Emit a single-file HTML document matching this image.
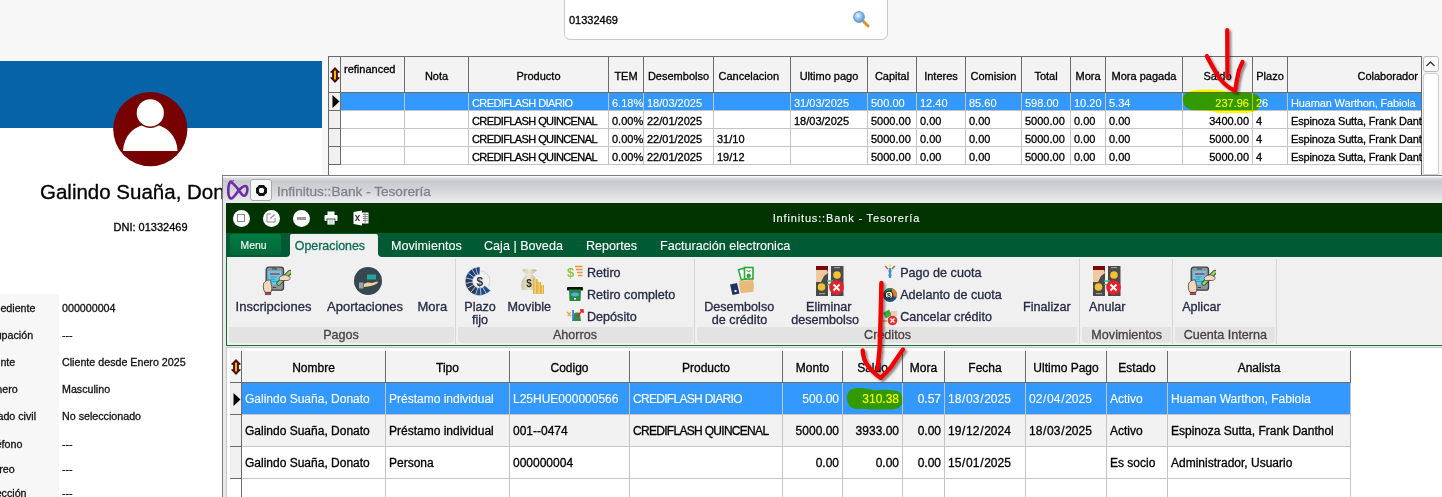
<!DOCTYPE html>
<html><head><meta charset="utf-8"><style>
html,body{margin:0;padding:0}
body{width:1442px;height:497px;overflow:hidden;position:relative;background:#f7f7f7;font-family:"Liberation Sans",sans-serif}
.a{position:absolute}
.t{white-space:pre;-webkit-text-stroke:0.3px currentColor}
.clip{position:absolute;overflow:hidden}
</style></head><body>

<div class="a" style="left:564px;top:-8px;width:322px;height:46px;background:#fff;border:1px solid #c9c9c9;border-radius:6px;"></div>
<div class="a t" style="left:569px;top:14px;font-size:11px;line-height:12.65px;color:#000;">01332469</div>
<svg class="a" style="left:852px;top:10px" width="18" height="18" viewBox="0 0 18 18">
<defs><radialGradient id="mg" cx="40%" cy="35%" r="60%"><stop offset="0" stop-color="#e8f4ff"/><stop offset="1" stop-color="#5b9bd8"/></radialGradient></defs>
<line x1="10" y1="10" x2="16" y2="16" stroke="#d29a2a" stroke-width="3" stroke-linecap="round"/>
<circle cx="7" cy="7" r="5.3" fill="url(#mg)" stroke="#6f9fcf" stroke-width="1.2"/>
</svg>
<div class="a" style="left:0px;top:61px;width:322px;height:436px;background:#fff;"></div>
<div class="a" style="left:0px;top:61px;width:322px;height:67px;background:#0763a8;"></div>
<svg class="a" style="left:112px;top:91px" width="77" height="77" viewBox="0 0 77 77">
<circle cx="38.3" cy="38.2" r="37.1" fill="#770000"/>
<path d="M11.1 60.1 A27.2 27.2 0 0 1 65.5 60.1 Z" fill="#fff"/>
<circle cx="38.3" cy="21.9" r="15.1" fill="#770000"/>
<circle cx="38.3" cy="21.9" r="13.6" fill="#fff"/>
</svg>
<div class="a t" style="left:40px;top:180px;font-size:20.5px;line-height:23.57px;color:#000;">Galindo Suaña, Donato</div>
<div class="a t" style="left:-349.5px;width:1000px;text-align:center;top:221px;font-size:11px;line-height:12.65px;color:#000;">DNI: 01332469</div>
<div class="a" style="left:0px;top:294px;width:59px;height:203px;background:#f7f7f7;"></div>
<div class="clip" style="left:0;top:0;width:59px;height:497px">
<div class="a t" style="left:-18px;top:302px;font-size:10.7px;line-height:12.30px;color:#111;">Expediente</div>
<div class="a t" style="left:-18px;top:329px;font-size:10.7px;line-height:12.30px;color:#111;">Ocupación</div>
<div class="a t" style="left:-18px;top:356px;font-size:10.7px;line-height:12.30px;color:#111;">Cliente</div>
<div class="a t" style="left:-18px;top:383px;font-size:10.7px;line-height:12.30px;color:#111;">Género</div>
<div class="a t" style="left:-18px;top:410px;font-size:10.7px;line-height:12.30px;color:#111;">Estado civil</div>
<div class="a t" style="left:-18px;top:438px;font-size:10.7px;line-height:12.30px;color:#111;">Teléfono</div>
<div class="a t" style="left:-18px;top:463px;font-size:10.7px;line-height:12.30px;color:#111;">Correo</div>
<div class="a t" style="left:-18px;top:487px;font-size:10.7px;line-height:12.30px;color:#111;">Dirección</div>
</div>
<div class="a t" style="left:62px;top:302px;font-size:10.7px;line-height:12.30px;color:#111;">000000004</div>
<div class="a t" style="left:62px;top:329px;font-size:10.7px;line-height:12.30px;color:#111;">---</div>
<div class="a t" style="left:62px;top:356px;font-size:10.7px;line-height:12.30px;color:#111;">Cliente desde Enero 2025</div>
<div class="a t" style="left:62px;top:383px;font-size:10.7px;line-height:12.30px;color:#111;">Masculino</div>
<div class="a t" style="left:62px;top:410px;font-size:10.7px;line-height:12.30px;color:#111;">No seleccionado</div>
<div class="a t" style="left:62px;top:438px;font-size:10.7px;line-height:12.30px;color:#111;">---</div>
<div class="a t" style="left:62px;top:463px;font-size:10.7px;line-height:12.30px;color:#111;">---</div>
<div class="a t" style="left:62px;top:487px;font-size:10.7px;line-height:12.30px;color:#111;">---</div>
<div class="a" style="left:328px;top:56px;width:1094px;height:119px;background:#fff;"></div>
<div class="a" style="left:328px;top:56px;width:1094px;height:36px;background:#f3f3f3;"></div>
<div class="a" style="left:341px;top:93px;width:1081px;height:17px;background:#3399ff;"></div>
<div class="a" style="left:329px;top:93px;width:12px;height:71px;background:#f0f0f0;"></div>
<div class="a" style="left:328px;top:56px;width:1094px;height:1px;background:#6b6b6b;"></div>
<div class="a" style="left:328px;top:92px;width:1094px;height:1px;background:#6b6b6b;"></div>
<div class="a" style="left:341px;top:110px;width:1081px;height:1px;background:#c4c4c4;"></div>
<div class="a" style="left:328px;top:110px;width:13px;height:1px;background:#6b6b6b;"></div>
<div class="a" style="left:341px;top:128px;width:1081px;height:1px;background:#c4c4c4;"></div>
<div class="a" style="left:328px;top:128px;width:13px;height:1px;background:#6b6b6b;"></div>
<div class="a" style="left:341px;top:146px;width:1081px;height:1px;background:#c4c4c4;"></div>
<div class="a" style="left:328px;top:146px;width:13px;height:1px;background:#6b6b6b;"></div>
<div class="a" style="left:341px;top:164px;width:1081px;height:1px;background:#c4c4c4;"></div>
<div class="a" style="left:328px;top:164px;width:13px;height:1px;background:#6b6b6b;"></div>
<div class="a" style="left:328px;top:56px;width:1px;height:119px;background:#6b6b6b;"></div>
<div class="a" style="left:1421px;top:56px;width:1px;height:119px;background:#6b6b6b;"></div>
<div class="a" style="left:340px;top:56px;width:1px;height:109px;background:#6b6b6b;"></div>
<div class="a" style="left:404px;top:56px;width:1px;height:37px;background:#6b6b6b;"></div>
<div class="a" style="left:404px;top:93px;width:1px;height:72px;background:#c4c4c4;"></div>
<div class="a" style="left:468px;top:56px;width:1px;height:37px;background:#6b6b6b;"></div>
<div class="a" style="left:468px;top:93px;width:1px;height:72px;background:#c4c4c4;"></div>
<div class="a" style="left:608px;top:56px;width:1px;height:37px;background:#6b6b6b;"></div>
<div class="a" style="left:608px;top:93px;width:1px;height:72px;background:#c4c4c4;"></div>
<div class="a" style="left:643px;top:56px;width:1px;height:37px;background:#6b6b6b;"></div>
<div class="a" style="left:643px;top:93px;width:1px;height:72px;background:#c4c4c4;"></div>
<div class="a" style="left:713px;top:56px;width:1px;height:37px;background:#6b6b6b;"></div>
<div class="a" style="left:713px;top:93px;width:1px;height:72px;background:#c4c4c4;"></div>
<div class="a" style="left:790px;top:56px;width:1px;height:37px;background:#6b6b6b;"></div>
<div class="a" style="left:790px;top:93px;width:1px;height:72px;background:#c4c4c4;"></div>
<div class="a" style="left:867px;top:56px;width:1px;height:37px;background:#6b6b6b;"></div>
<div class="a" style="left:867px;top:93px;width:1px;height:72px;background:#c4c4c4;"></div>
<div class="a" style="left:916px;top:56px;width:1px;height:37px;background:#6b6b6b;"></div>
<div class="a" style="left:916px;top:93px;width:1px;height:72px;background:#c4c4c4;"></div>
<div class="a" style="left:965px;top:56px;width:1px;height:37px;background:#6b6b6b;"></div>
<div class="a" style="left:965px;top:93px;width:1px;height:72px;background:#c4c4c4;"></div>
<div class="a" style="left:1021px;top:56px;width:1px;height:37px;background:#6b6b6b;"></div>
<div class="a" style="left:1021px;top:93px;width:1px;height:72px;background:#c4c4c4;"></div>
<div class="a" style="left:1070px;top:56px;width:1px;height:37px;background:#6b6b6b;"></div>
<div class="a" style="left:1070px;top:93px;width:1px;height:72px;background:#c4c4c4;"></div>
<div class="a" style="left:1105px;top:56px;width:1px;height:37px;background:#6b6b6b;"></div>
<div class="a" style="left:1105px;top:93px;width:1px;height:72px;background:#c4c4c4;"></div>
<div class="a" style="left:1182px;top:56px;width:1px;height:37px;background:#6b6b6b;"></div>
<div class="a" style="left:1182px;top:93px;width:1px;height:72px;background:#c4c4c4;"></div>
<div class="a" style="left:1252px;top:56px;width:1px;height:37px;background:#6b6b6b;"></div>
<div class="a" style="left:1252px;top:93px;width:1px;height:72px;background:#c4c4c4;"></div>
<div class="a" style="left:1287px;top:56px;width:1px;height:37px;background:#6b6b6b;"></div>
<div class="a" style="left:1287px;top:93px;width:1px;height:72px;background:#c4c4c4;"></div>
<svg class="a" style="left:330px;top:67px" width="10" height="16" viewBox="0 0 10 16">
<path d="M5 0.6 L9.4 5.2 L7.3 5.2 L7.3 10.8 L9.4 10.8 L5 15.4 L0.6 10.8 L2.7 10.8 L2.7 5.2 L0.6 5.2 Z" fill="#7a0000" stroke="#000" stroke-width="0.9" stroke-linejoin="round"/>
<rect x="4.2" y="3.6" width="1.6" height="8.8" fill="#ffee00"/>
</svg>
<svg class="a" style="left:332px;top:95px" width="8" height="13" viewBox="0 0 8 13"><path d="M0.5 0 L7.5 6.5 L0.5 13 Z" fill="#000"/></svg>
<div class="a t" style="left:344px;top:63px;font-size:11px;line-height:12.65px;color:#000;">refinanced</div>
<div class="a t" style="left:-63.5px;width:1000px;text-align:center;top:70px;font-size:11px;line-height:12.65px;color:#000;">Nota</div>
<div class="a t" style="left:38.5px;width:1000px;text-align:center;top:70px;font-size:11px;line-height:12.65px;color:#000;">Producto</div>
<div class="a t" style="left:126.0px;width:1000px;text-align:center;top:70px;font-size:11px;line-height:12.65px;color:#000;">TEM</div>
<div class="a t" style="left:178.5px;width:1000px;text-align:center;top:70px;font-size:11px;line-height:12.65px;color:#000;">Desembolso</div>
<div class="a t" style="left:718.5px;top:70px;font-size:11px;line-height:12.65px;color:#000;">Cancelacion</div>
<div class="a t" style="left:329.0px;width:1000px;text-align:center;top:70px;font-size:11px;line-height:12.65px;color:#000;">Ultimo pago</div>
<div class="a t" style="left:392.0px;width:1000px;text-align:center;top:70px;font-size:11px;line-height:12.65px;color:#000;">Capital</div>
<div class="a t" style="left:441.0px;width:1000px;text-align:center;top:70px;font-size:11px;line-height:12.65px;color:#000;">Interes</div>
<div class="a t" style="left:493.5px;width:1000px;text-align:center;top:70px;font-size:11px;line-height:12.65px;color:#000;">Comision</div>
<div class="a t" style="left:546.0px;width:1000px;text-align:center;top:70px;font-size:11px;line-height:12.65px;color:#000;">Total</div>
<div class="a t" style="left:588.0px;width:1000px;text-align:center;top:70px;font-size:11px;line-height:12.65px;color:#000;">Mora</div>
<div class="a t" style="left:644.0px;width:1000px;text-align:center;top:70px;font-size:11px;line-height:12.65px;color:#000;">Mora pagada</div>
<div class="a t" style="left:717.5px;width:1000px;text-align:center;top:70px;font-size:11px;line-height:12.65px;color:#000;">Saldo</div>
<div class="a t" style="left:770.0px;width:1000px;text-align:center;top:70px;font-size:11px;line-height:12.65px;color:#000;">Plazo</div>
<div class="a t" style="left:418px;width:1000px;text-align:right;top:70px;font-size:11px;line-height:12.65px;color:#000;">Colaborador</div>
<div class="clip" style="left:469px;top:93px;width:139px;height:17px">
<div class="a t" style="left:3px;top:4px;font-size:11px;line-height:12.65px;color:#fff;letter-spacing:-0.6px;-webkit-text-stroke:0.1px currentColor;">CREDIFLASH DIARIO</div>
</div>
<div class="clip" style="left:609px;top:93px;width:34px;height:17px">
<div class="a t" style="left:3px;top:4px;font-size:11px;line-height:12.65px;color:#fff;-webkit-text-stroke:0.1px currentColor;">6.18%</div>
</div>
<div class="clip" style="left:644px;top:93px;width:69px;height:17px">
<div class="a t" style="left:3px;top:4px;font-size:11px;line-height:12.65px;color:#fff;-webkit-text-stroke:0.1px currentColor;">18/03/2025</div>
</div>
<div class="clip" style="left:791px;top:93px;width:76px;height:17px">
<div class="a t" style="left:3px;top:4px;font-size:11px;line-height:12.65px;color:#fff;-webkit-text-stroke:0.1px currentColor;">31/03/2025</div>
</div>
<div class="clip" style="left:868px;top:93px;width:48px;height:17px">
<div class="a t" style="left:3px;top:4px;font-size:11px;line-height:12.65px;color:#fff;-webkit-text-stroke:0.1px currentColor;">500.00</div>
</div>
<div class="clip" style="left:917px;top:93px;width:48px;height:17px">
<div class="a t" style="left:3px;top:4px;font-size:11px;line-height:12.65px;color:#fff;-webkit-text-stroke:0.1px currentColor;">12.40</div>
</div>
<div class="clip" style="left:966px;top:93px;width:55px;height:17px">
<div class="a t" style="left:3px;top:4px;font-size:11px;line-height:12.65px;color:#fff;-webkit-text-stroke:0.1px currentColor;">85.60</div>
</div>
<div class="clip" style="left:1022px;top:93px;width:48px;height:17px">
<div class="a t" style="left:3px;top:4px;font-size:11px;line-height:12.65px;color:#fff;-webkit-text-stroke:0.1px currentColor;">598.00</div>
</div>
<div class="clip" style="left:1071px;top:93px;width:34px;height:17px">
<div class="a t" style="left:3px;top:4px;font-size:11px;line-height:12.65px;color:#fff;-webkit-text-stroke:0.1px currentColor;">10.20</div>
</div>
<div class="clip" style="left:1106px;top:93px;width:76px;height:17px">
<div class="a t" style="left:3px;top:4px;font-size:11px;line-height:12.65px;color:#fff;-webkit-text-stroke:0.1px currentColor;">5.34</div>
</div>
<div class="clip" style="left:1183px;top:93px;width:69px;height:17px">
<div class="a t" style="left:-934px;width:1000px;text-align:right;top:4px;font-size:11px;line-height:12.65px;color:#fff;-webkit-text-stroke:0.1px currentColor;">237.96</div>
</div>
<div class="clip" style="left:1253px;top:93px;width:34px;height:17px">
<div class="a t" style="left:3px;top:4px;font-size:11px;line-height:12.65px;color:#fff;-webkit-text-stroke:0.1px currentColor;">26</div>
</div>
<div class="clip" style="left:1288px;top:93px;width:134px;height:17px">
<div class="a t" style="left:3px;top:4px;font-size:11px;line-height:12.65px;color:#fff;letter-spacing:-0.15px;-webkit-text-stroke:0.1px currentColor;">Huaman Warthon, Fabiola</div>
</div>
<div class="clip" style="left:469px;top:111px;width:139px;height:17px">
<div class="a t" style="left:3px;top:4px;font-size:11px;line-height:12.65px;color:#000;letter-spacing:-0.6px;">CREDIFLASH QUINCENAL</div>
</div>
<div class="clip" style="left:609px;top:111px;width:34px;height:17px">
<div class="a t" style="left:3px;top:4px;font-size:11px;line-height:12.65px;color:#000;">0.00%</div>
</div>
<div class="clip" style="left:644px;top:111px;width:69px;height:17px">
<div class="a t" style="left:3px;top:4px;font-size:11px;line-height:12.65px;color:#000;">22/01/2025</div>
</div>
<div class="clip" style="left:791px;top:111px;width:76px;height:17px">
<div class="a t" style="left:3px;top:4px;font-size:11px;line-height:12.65px;color:#000;">18/03/2025</div>
</div>
<div class="clip" style="left:868px;top:111px;width:48px;height:17px">
<div class="a t" style="left:3px;top:4px;font-size:11px;line-height:12.65px;color:#000;">5000.00</div>
</div>
<div class="clip" style="left:917px;top:111px;width:48px;height:17px">
<div class="a t" style="left:3px;top:4px;font-size:11px;line-height:12.65px;color:#000;">0.00</div>
</div>
<div class="clip" style="left:966px;top:111px;width:55px;height:17px">
<div class="a t" style="left:3px;top:4px;font-size:11px;line-height:12.65px;color:#000;">0.00</div>
</div>
<div class="clip" style="left:1022px;top:111px;width:48px;height:17px">
<div class="a t" style="left:3px;top:4px;font-size:11px;line-height:12.65px;color:#000;">5000.00</div>
</div>
<div class="clip" style="left:1071px;top:111px;width:34px;height:17px">
<div class="a t" style="left:3px;top:4px;font-size:11px;line-height:12.65px;color:#000;">0.00</div>
</div>
<div class="clip" style="left:1106px;top:111px;width:76px;height:17px">
<div class="a t" style="left:3px;top:4px;font-size:11px;line-height:12.65px;color:#000;">0.00</div>
</div>
<div class="clip" style="left:1183px;top:111px;width:69px;height:17px">
<div class="a t" style="left:-934px;width:1000px;text-align:right;top:4px;font-size:11px;line-height:12.65px;color:#000;">3400.00</div>
</div>
<div class="clip" style="left:1253px;top:111px;width:34px;height:17px">
<div class="a t" style="left:3px;top:4px;font-size:11px;line-height:12.65px;color:#000;">4</div>
</div>
<div class="clip" style="left:1288px;top:111px;width:134px;height:17px">
<div class="a t" style="left:3px;top:4px;font-size:11px;line-height:12.65px;color:#000;letter-spacing:-0.15px;">Espinoza Sutta, Frank Danthol</div>
</div>
<div class="clip" style="left:469px;top:129px;width:139px;height:17px">
<div class="a t" style="left:3px;top:4px;font-size:11px;line-height:12.65px;color:#000;letter-spacing:-0.6px;">CREDIFLASH QUINCENAL</div>
</div>
<div class="clip" style="left:609px;top:129px;width:34px;height:17px">
<div class="a t" style="left:3px;top:4px;font-size:11px;line-height:12.65px;color:#000;">0.00%</div>
</div>
<div class="clip" style="left:644px;top:129px;width:69px;height:17px">
<div class="a t" style="left:3px;top:4px;font-size:11px;line-height:12.65px;color:#000;">22/01/2025</div>
</div>
<div class="clip" style="left:714px;top:129px;width:76px;height:17px">
<div class="a t" style="left:3px;top:4px;font-size:11px;line-height:12.65px;color:#000;">31/10</div>
</div>
<div class="clip" style="left:868px;top:129px;width:48px;height:17px">
<div class="a t" style="left:3px;top:4px;font-size:11px;line-height:12.65px;color:#000;">5000.00</div>
</div>
<div class="clip" style="left:917px;top:129px;width:48px;height:17px">
<div class="a t" style="left:3px;top:4px;font-size:11px;line-height:12.65px;color:#000;">0.00</div>
</div>
<div class="clip" style="left:966px;top:129px;width:55px;height:17px">
<div class="a t" style="left:3px;top:4px;font-size:11px;line-height:12.65px;color:#000;">0.00</div>
</div>
<div class="clip" style="left:1022px;top:129px;width:48px;height:17px">
<div class="a t" style="left:3px;top:4px;font-size:11px;line-height:12.65px;color:#000;">5000.00</div>
</div>
<div class="clip" style="left:1071px;top:129px;width:34px;height:17px">
<div class="a t" style="left:3px;top:4px;font-size:11px;line-height:12.65px;color:#000;">0.00</div>
</div>
<div class="clip" style="left:1106px;top:129px;width:76px;height:17px">
<div class="a t" style="left:3px;top:4px;font-size:11px;line-height:12.65px;color:#000;">0.00</div>
</div>
<div class="clip" style="left:1183px;top:129px;width:69px;height:17px">
<div class="a t" style="left:-934px;width:1000px;text-align:right;top:4px;font-size:11px;line-height:12.65px;color:#000;">5000.00</div>
</div>
<div class="clip" style="left:1253px;top:129px;width:34px;height:17px">
<div class="a t" style="left:3px;top:4px;font-size:11px;line-height:12.65px;color:#000;">4</div>
</div>
<div class="clip" style="left:1288px;top:129px;width:134px;height:17px">
<div class="a t" style="left:3px;top:4px;font-size:11px;line-height:12.65px;color:#000;letter-spacing:-0.15px;">Espinoza Sutta, Frank Danthol</div>
</div>
<div class="clip" style="left:469px;top:147px;width:139px;height:17px">
<div class="a t" style="left:3px;top:4px;font-size:11px;line-height:12.65px;color:#000;letter-spacing:-0.6px;">CREDIFLASH QUINCENAL</div>
</div>
<div class="clip" style="left:609px;top:147px;width:34px;height:17px">
<div class="a t" style="left:3px;top:4px;font-size:11px;line-height:12.65px;color:#000;">0.00%</div>
</div>
<div class="clip" style="left:644px;top:147px;width:69px;height:17px">
<div class="a t" style="left:3px;top:4px;font-size:11px;line-height:12.65px;color:#000;">22/01/2025</div>
</div>
<div class="clip" style="left:714px;top:147px;width:76px;height:17px">
<div class="a t" style="left:3px;top:4px;font-size:11px;line-height:12.65px;color:#000;">19/12</div>
</div>
<div class="clip" style="left:868px;top:147px;width:48px;height:17px">
<div class="a t" style="left:3px;top:4px;font-size:11px;line-height:12.65px;color:#000;">5000.00</div>
</div>
<div class="clip" style="left:917px;top:147px;width:48px;height:17px">
<div class="a t" style="left:3px;top:4px;font-size:11px;line-height:12.65px;color:#000;">0.00</div>
</div>
<div class="clip" style="left:966px;top:147px;width:55px;height:17px">
<div class="a t" style="left:3px;top:4px;font-size:11px;line-height:12.65px;color:#000;">0.00</div>
</div>
<div class="clip" style="left:1022px;top:147px;width:48px;height:17px">
<div class="a t" style="left:3px;top:4px;font-size:11px;line-height:12.65px;color:#000;">5000.00</div>
</div>
<div class="clip" style="left:1071px;top:147px;width:34px;height:17px">
<div class="a t" style="left:3px;top:4px;font-size:11px;line-height:12.65px;color:#000;">0.00</div>
</div>
<div class="clip" style="left:1106px;top:147px;width:76px;height:17px">
<div class="a t" style="left:3px;top:4px;font-size:11px;line-height:12.65px;color:#000;">0.00</div>
</div>
<div class="clip" style="left:1183px;top:147px;width:69px;height:17px">
<div class="a t" style="left:-934px;width:1000px;text-align:right;top:4px;font-size:11px;line-height:12.65px;color:#000;">5000.00</div>
</div>
<div class="clip" style="left:1253px;top:147px;width:34px;height:17px">
<div class="a t" style="left:3px;top:4px;font-size:11px;line-height:12.65px;color:#000;">4</div>
</div>
<div class="clip" style="left:1288px;top:147px;width:134px;height:17px">
<div class="a t" style="left:3px;top:4px;font-size:11px;line-height:12.65px;color:#000;letter-spacing:-0.15px;">Espinoza Sutta, Frank Danthol</div>
</div>
<div class="a" style="left:1422px;top:56px;width:17px;height:119px;background:#f3f3f3;"></div>
<div class="a" style="left:1423px;top:56px;width:16px;height:16px;background:#fdfdfd;border:1px solid #b9b9b9;border-radius:3px;box-sizing:border-box;"></div>
<svg class="a" style="left:1425px;top:60px" width="11" height="8" viewBox="0 0 11 8"><path d="M1.5 6 L5.5 2 L9.5 6" fill="none" stroke="#333" stroke-width="1.3"/></svg>
<div class="a" style="left:1423px;top:73px;width:16px;height:102px;background:#fff;border:1px solid #d0d0d0;border-radius:3px 3px 0 0;box-sizing:border-box;"></div>
<div class="a" style="left:222px;top:175px;width:1220px;height:322px;background:#e9e9e9;"></div>
<div class="a" style="left:222px;top:175px;width:1220px;height:1px;background:#7d7d7d;"></div>
<div class="a" style="left:222px;top:175px;width:1px;height:322px;background:#7d7d7d;"></div>
<div class="a" style="left:223px;top:176px;width:1219px;height:27px;background:linear-gradient(#fafafa 0px,#fafafa 1px,#d9dbde 2px,#c8cacd 5px,#d3d5d7 14px,#e6e7e8 24px,#ececed 27px);"></div>
<svg class="a" style="left:225px;top:177px" width="26" height="25" viewBox="0 0 26 25">
<path d="M6 5 C9 7 13 12 15 15 C17 18 19 19 20 18.5 C22 17 23 13 22 10 C21 8 18 9 15 12 C12 15 9 21 6.5 21.5 C4 22 3 17 3.3 12.6 C3.5 8 4.5 5 6 4.5 Z" fill="none" stroke="#6d2ca6" stroke-width="2.6" stroke-linejoin="round"/>
<path d="M5 6 C7 4 8 4 9 3.5" fill="none" stroke="#7d3cb6" stroke-width="1.2"/>
</svg>
<div class="a" style="left:250px;top:179px;width:22px;height:22px;background:#f6f7f8;border:1px solid #a7abb0;border-radius:3px;box-sizing:border-box;"></div>
<svg class="a" style="left:255px;top:184px" width="13" height="13" viewBox="0 0 13 13">
<path d="M4.5 2.5 L8.5 2.5 L10.5 4.5 L10.5 8.5 L8.5 10.5 L4.5 10.5 L2.5 8.5 L2.5 4.5 Z" fill="none" stroke="#111" stroke-width="3"/>
<path d="M1.5 3.5 L3.5 1.5 M9.5 1.5 L11.5 3.5 M11.5 9.5 L9.5 11.5 M3.5 11.5 L1.5 9.5" stroke="#f6f7f8" stroke-width="0.7"/>
</svg>
<div class="a t" style="left:277px;top:184px;font-size:13.6px;line-height:15.64px;color:#7f848e;">Infinitus::Bank - Tesorería</div>
<div class="a" style="left:226px;top:203px;width:1216px;height:30px;background:#003300;"></div>
<div class="a" style="left:232.5px;top:209.5px;width:17px;height:17px;border-radius:50%;background:#fff"></div>
<div class="a" style="left:262.5px;top:209.5px;width:17px;height:17px;border-radius:50%;background:#fff"></div>
<div class="a" style="left:292.5px;top:209.5px;width:17px;height:17px;border-radius:50%;background:#fff"></div>
<div class="a" style="left:237px;top:214px;width:8px;height:8px;border:1px solid #8a8a8a;box-sizing:border-box"></div>
<svg class="a" style="left:265px;top:212px" width="12" height="12" viewBox="0 0 12 12"><path d="M6 2 L2 2 L2 10 L10 10 L10 6" fill="none" stroke="#8a8a8a" stroke-width="1"/><path d="M5.5 6.5 L9.5 2.5" stroke="#8a8a8a" stroke-width="1.1"/></svg>
<div class="a" style="left:297px;top:216.5px;width:8.5px;height:3px;background:#9a9a9a;"></div>
<svg class="a" style="left:324px;top:211px" width="14" height="14" viewBox="0 0 14 14">
<rect x="3.5" y="0.5" width="7" height="4" fill="#fff"/>
<rect x="0.5" y="4" width="13" height="6" rx="1" fill="#fff"/>
<rect x="3" y="8" width="8" height="6" fill="#fff" stroke="#003300" stroke-width="0.8"/>
<line x1="4.5" y1="10" x2="9.5" y2="10" stroke="#aaa" stroke-width="0.8"/><line x1="4.5" y1="12" x2="9.5" y2="12" stroke="#aaa" stroke-width="0.8"/>
</svg>
<svg class="a" style="left:353px;top:210px" width="16" height="16" viewBox="0 0 16 16">
<path d="M0.5 2 L9 0.5 L9 15.5 L0.5 14 Z" fill="#fff"/>
<rect x="9" y="2.5" width="6.5" height="11" fill="#fff"/>
<path d="M10 4.5 H15 M10 6.5 H15 M10 8.5 H15 M10 10.5 H15 M12 3 V13" stroke="#777" stroke-width="0.8"/>
<path d="M2.5 5 L6.5 11 M6.5 5 L2.5 11" stroke="#333" stroke-width="1.3"/>
</svg>
<div class="a t" style="left:346.4px;width:1000px;text-align:center;top:212px;font-size:11px;line-height:12.65px;color:#fff;letter-spacing:0.85px;-webkit-text-stroke:0.1px currentColor;">Infinitus::Bank - Tesorería</div>
<div class="a" style="left:226px;top:233px;width:1216px;height:24px;background:#005b34;"></div>
<div class="a" style="left:230px;top:234px;width:51px;height:21px;background:linear-gradient(#007c42,#00673a);border-radius:3px;"></div>
<div class="a t" style="left:240.5px;top:240px;font-size:10.4px;line-height:11.96px;color:#fff;-webkit-text-stroke:0.1px currentColor;">Menu</div>
<div class="a" style="left:286px;top:252px;width:96px;height:5px;background:#f0f0f0;"></div>
<div class="a" style="left:282px;top:248px;width:8px;height:9px;background:#005b34;border-radius:0 0 4px 0;"></div>
<div class="a" style="left:378px;top:248px;width:8px;height:9px;background:#005b34;border-radius:0 0 0 4px;"></div>
<div class="a" style="left:290px;top:234px;width:88px;height:24px;background:#f0f0f0;border-radius:2px 2px 0 0;"></div>
<div class="a t" style="left:294.8px;top:239px;font-size:12.4px;line-height:14.26px;color:#0e6a55;">Operaciones</div>
<div class="a t" style="left:391px;top:239px;font-size:12.6px;line-height:14.49px;color:#fff;-webkit-text-stroke:0.1px currentColor;">Movimientos</div>
<div class="a t" style="left:484px;top:239px;font-size:12.6px;line-height:14.49px;color:#fff;-webkit-text-stroke:0.1px currentColor;">Caja | Boveda</div>
<div class="a t" style="left:586px;top:239px;font-size:12.6px;line-height:14.49px;color:#fff;-webkit-text-stroke:0.1px currentColor;">Reportes</div>
<div class="a t" style="left:660px;top:239px;font-size:12.6px;line-height:14.49px;color:#fff;-webkit-text-stroke:0.1px currentColor;">Facturación electronica</div>
<div class="a" style="left:226px;top:257px;width:1216px;height:89px;background:#f0f0f0;"></div>
<div class="a" style="left:226px;top:257px;width:1px;height:89px;background:#0f6b35;"></div>
<div class="a" style="left:226px;top:345px;width:1216px;height:1px;background:#1b6e3e;"></div>
<div class="a" style="left:229px;top:327px;width:225px;height:16px;background:#e3e3e3;border-radius:0 0 4px 4px;"></div>
<div class="a t" style="left:-159px;width:1000px;text-align:center;top:328px;font-size:12.6px;line-height:14.49px;color:#4a4040;">Pagos</div>
<div class="a" style="left:458px;top:327px;width:235px;height:16px;background:#e3e3e3;border-radius:0 0 4px 4px;"></div>
<div class="a t" style="left:75px;width:1000px;text-align:center;top:328px;font-size:12.6px;line-height:14.49px;color:#4a4040;">Ahorros</div>
<div class="a" style="left:697px;top:327px;width:380px;height:16px;background:#e3e3e3;border-radius:0 0 4px 4px;"></div>
<div class="a t" style="left:387.5px;width:1000px;text-align:center;top:328px;font-size:12.6px;line-height:14.49px;color:#4a4040;">Créditos</div>
<div class="a" style="left:1082px;top:327px;width:89px;height:16px;background:#e3e3e3;border-radius:0 0 4px 4px;"></div>
<div class="a t" style="left:626.7px;width:1000px;text-align:center;top:328px;font-size:12.6px;line-height:14.49px;color:#4a4040;">Movimientos</div>
<div class="a" style="left:1175px;top:327px;width:100px;height:16px;background:#e3e3e3;border-radius:0 0 4px 4px;"></div>
<div class="a t" style="left:725.4000000000001px;width:1000px;text-align:center;top:328px;font-size:12.6px;line-height:14.49px;color:#4a4040;">Cuenta Interna</div>
<div class="a" style="left:455px;top:259px;width:1px;height:85px;background:#d6d6d6;"></div>
<div class="a" style="left:694px;top:259px;width:1px;height:85px;background:#d6d6d6;"></div>
<div class="a" style="left:1079px;top:259px;width:1px;height:85px;background:#d6d6d6;"></div>
<div class="a" style="left:1172px;top:259px;width:1px;height:85px;background:#d6d6d6;"></div>
<div class="a" style="left:1276px;top:259px;width:1px;height:85px;background:#d6d6d6;"></div>
<div class="a t" style="left:-226.5px;width:1000px;text-align:center;top:300px;font-size:13.0px;line-height:14.95px;color:#262a44;">Inscripciones</div>
<div class="a t" style="left:-135px;width:1000px;text-align:center;top:300px;font-size:13.0px;line-height:14.95px;color:#262a44;">Aportaciones</div>
<div class="a t" style="left:-67.69999999999999px;width:1000px;text-align:center;top:300px;font-size:13.0px;line-height:14.95px;color:#262a44;">Mora</div>
<div class="a t" style="left:-20px;width:1000px;text-align:center;top:300px;font-size:12.6px;line-height:14.49px;color:#262a44;">Plazo</div>
<div class="a t" style="left:-20px;width:1000px;text-align:center;top:313px;font-size:12.6px;line-height:14.49px;color:#262a44;">fijo</div>
<div class="a t" style="left:29.299999999999955px;width:1000px;text-align:center;top:300px;font-size:12.6px;line-height:14.49px;color:#262a44;">Movible</div>
<div class="a t" style="left:587px;top:266px;font-size:12.6px;line-height:14.49px;color:#262a44;">Retiro</div>
<div class="a t" style="left:587px;top:288px;font-size:12.6px;line-height:14.49px;color:#262a44;">Retiro completo</div>
<div class="a t" style="left:587px;top:310px;font-size:12.6px;line-height:14.49px;color:#262a44;">Depósito</div>
<div class="a t" style="left:239.20000000000005px;width:1000px;text-align:center;top:300px;font-size:12.6px;line-height:14.49px;color:#262a44;">Desembolso</div>
<div class="a t" style="left:239.5px;width:1000px;text-align:center;top:313px;font-size:12.6px;line-height:14.49px;color:#262a44;">de crédito</div>
<div class="a t" style="left:328.79999999999995px;width:1000px;text-align:center;top:300px;font-size:12.6px;line-height:14.49px;color:#262a44;">Eliminar</div>
<div class="a t" style="left:325.20000000000005px;width:1000px;text-align:center;top:313px;font-size:12.6px;line-height:14.49px;color:#262a44;">desembolso</div>
<div class="a t" style="left:900.2px;top:266px;font-size:12.6px;line-height:14.49px;color:#262a44;">Pago de cuota</div>
<div class="a t" style="left:900.2px;top:288px;font-size:12.6px;line-height:14.49px;color:#262a44;">Adelanto de cuota</div>
<div class="a t" style="left:900.2px;top:310px;font-size:12.6px;line-height:14.49px;color:#262a44;">Cancelar crédito</div>
<div class="a t" style="left:546.9000000000001px;width:1000px;text-align:center;top:300px;font-size:12.6px;line-height:14.49px;color:#262a44;">Finalizar</div>
<div class="a t" style="left:607.2px;width:1000px;text-align:center;top:300px;font-size:12.6px;line-height:14.49px;color:#262a44;">Anular</div>
<div class="a t" style="left:701.4000000000001px;width:1000px;text-align:center;top:300px;font-size:12.6px;line-height:14.49px;color:#262a44;">Aplicar</div>
<svg class="a" style="left:261px;top:266px" width="30" height="30" viewBox="0 0 30 30">
<rect x="5.2" y="1.2" width="17.3" height="23" rx="2.5" fill="#8f959c" stroke="#3c3f46" stroke-width="1.3"/>
<rect x="11" y="2.4" width="5" height="1" fill="#3c3f46"/>
<rect x="7.1" y="5" width="13.1" height="13.8" fill="#5ecbea"/>
<rect x="9" y="7.2" width="9.7" height="1.6" fill="#c23a44"/>
<path d="M9.5 11 H15.5 M9.5 13.2 H14 M9.5 15.4 H16" stroke="#3f8fb0" stroke-width="0.9"/>
<path d="M12 21.5 H15" stroke="#3c3f46" stroke-width="1"/>
<path d="M28.9 6.1 L17.7 17.4" stroke="#3c3f46" stroke-width="4.6" stroke-linecap="round"/>
<path d="M28.9 6.1 L17.7 17.4" stroke="#8fd35a" stroke-width="2.8" stroke-linecap="round"/>
<path d="M18 12 C20 9.5 23 8.5 25 9 L29 11 C29.5 13 28 14.5 26 14.5 L19.5 14.5 C18.5 14 18 13 18 12 Z" fill="#f3d8bc" stroke="#3c3f46" stroke-width="0.7"/>
<path d="M2.8 17 C2 20 2.2 24 4 26.4 L10 26.4 C11 24 11.2 21 10.2 18.5 L9.5 14.2 C7.5 13.5 4.5 14.5 2.8 17 Z" fill="#f3d8bc" stroke="#3c3f46" stroke-width="0.8"/>
<rect x="4.2" y="26.2" width="5.6" height="2.6" fill="#c23a44" stroke="#3c3f46" stroke-width="0.5"/>
</svg>
<svg class="a" style="left:1186px;top:266px" width="30" height="30" viewBox="0 0 30 30">
<rect x="5.2" y="1.2" width="17.3" height="23" rx="2.5" fill="#8f959c" stroke="#3c3f46" stroke-width="1.3"/>
<rect x="11" y="2.4" width="5" height="1" fill="#3c3f46"/>
<rect x="7.1" y="5" width="13.1" height="13.8" fill="#5ecbea"/>
<rect x="9" y="7.2" width="9.7" height="1.6" fill="#c23a44"/>
<path d="M9.5 11 H15.5 M9.5 13.2 H14 M9.5 15.4 H16" stroke="#3f8fb0" stroke-width="0.9"/>
<path d="M12 21.5 H15" stroke="#3c3f46" stroke-width="1"/>
<path d="M28.9 6.1 L17.7 17.4" stroke="#3c3f46" stroke-width="4.6" stroke-linecap="round"/>
<path d="M28.9 6.1 L17.7 17.4" stroke="#8fd35a" stroke-width="2.8" stroke-linecap="round"/>
<path d="M18 12 C20 9.5 23 8.5 25 9 L29 11 C29.5 13 28 14.5 26 14.5 L19.5 14.5 C18.5 14 18 13 18 12 Z" fill="#f3d8bc" stroke="#3c3f46" stroke-width="0.7"/>
<path d="M2.8 17 C2 20 2.2 24 4 26.4 L10 26.4 C11 24 11.2 21 10.2 18.5 L9.5 14.2 C7.5 13.5 4.5 14.5 2.8 17 Z" fill="#f3d8bc" stroke="#3c3f46" stroke-width="0.8"/>
<rect x="4.2" y="26.2" width="5.6" height="2.6" fill="#c23a44" stroke="#3c3f46" stroke-width="0.5"/>
</svg>
<svg class="a" style="left:354px;top:267px" width="28" height="28" viewBox="0 0 28 28">
<circle cx="14" cy="14" r="14" fill="#37474f"/>
<rect x="13" y="7.5" width="9" height="5" fill="#26a69a"/>
<path d="M10 17 C13 15 16 15.5 18 16 L23 14.5 C24 14.5 24 15.5 23 16.5 C20 18.5 16 19.5 10 20 Z" fill="#f6cf94"/>
<rect x="5" y="15.5" width="4.5" height="6" fill="#9aa4b5"/>
</svg>
<svg class="a" style="left:465px;top:266px" width="30" height="31" viewBox="0 0 30 31"><circle cx="14.5" cy="15.2" r="10.5" fill="none" stroke="#c8c8c8" stroke-width="0.7"/><path d="M25.45 24.39 A14.3 14.3 0 0 1 21.21 27.83 L17.69 21.20 A6.8 6.8 0 0 0 19.71 19.57 Z" fill="#1f4e8c" stroke="#e8eaee" stroke-width="0.5"/><path d="M21.21 27.83 A14.3 14.3 0 0 1 15.99 29.42 L15.21 21.96 A6.8 6.8 0 0 0 17.69 21.20 Z" fill="#1f4e8c" stroke="#e8eaee" stroke-width="0.5"/><path d="M15.99 29.42 A14.3 14.3 0 0 1 10.56 28.95 L12.63 21.74 A6.8 6.8 0 0 0 15.21 21.96 Z" fill="#1f4e8c" stroke="#e8eaee" stroke-width="0.5"/><path d="M10.56 28.95 A14.3 14.3 0 0 1 5.70 26.47 L10.31 20.56 A6.8 6.8 0 0 0 12.63 21.74 Z" fill="#2b3d55" stroke="#e8eaee" stroke-width="0.5"/><path d="M5.70 26.47 A14.3 14.3 0 0 1 2.12 22.35 L8.61 18.60 A6.8 6.8 0 0 0 10.31 20.56 Z" fill="#2b3d55" stroke="#e8eaee" stroke-width="0.5"/><path d="M2.12 22.35 A14.3 14.3 0 0 1 0.34 17.19 L7.77 16.15 A6.8 6.8 0 0 0 8.61 18.60 Z" fill="#2b3d55" stroke="#e8eaee" stroke-width="0.5"/><path d="M0.34 17.19 A14.3 14.3 0 0 1 0.62 11.74 L7.90 13.55 A6.8 6.8 0 0 0 7.77 16.15 Z" fill="#2d3f58" stroke="#e8eaee" stroke-width="0.5"/><path d="M0.62 11.74 A14.3 14.3 0 0 1 2.93 6.79 L9.00 11.20 A6.8 6.8 0 0 0 7.90 13.55 Z" fill="#1e3d7a" stroke="#e8eaee" stroke-width="0.5"/><path d="M2.93 6.79 A14.3 14.3 0 0 1 6.92 3.07 L10.90 9.43 A6.8 6.8 0 0 0 9.00 11.20 Z" fill="#1e3d7a" stroke="#e8eaee" stroke-width="0.5"/><path d="M6.92 3.07 A14.3 14.3 0 0 1 10.80 1.39 L12.74 8.63 A6.8 6.8 0 0 0 10.90 9.43 Z" fill="#1e3d7a" stroke="#e8eaee" stroke-width="0.5"/><path d="M10.80 1.39 A14.3 14.3 0 0 1 15.00 0.91 L14.74 8.40 A6.8 6.8 0 0 0 12.74 8.63 Z" fill="#1e3d7a" stroke="#e8eaee" stroke-width="0.5"/><text x="14.8" y="19.5" font-family="Liberation Sans" font-size="12" font-weight="bold" text-anchor="middle" fill="#2b3444">$</text></svg>
<svg class="a" style="left:519px;top:267px" width="26" height="28" viewBox="0 0 26 28">
<defs><linearGradient id="bag" x1="0" x2="1"><stop offset="0" stop-color="#cfc6ad"/><stop offset="0.5" stop-color="#ece6d4"/><stop offset="1" stop-color="#b9ae90"/></linearGradient>
<linearGradient id="coin" x1="0" x2="1"><stop offset="0" stop-color="#e0a830"/><stop offset="0.5" stop-color="#f6d67a"/><stop offset="1" stop-color="#d49a28"/></linearGradient></defs>
<path d="M3 3 C6 1 10 2 11 3 C13 1.5 16 2 18 3.5 C16 5 14 6.5 13 7.5 L8 7.5 C6 6 4 5 3 3 Z" fill="url(#bag)"/>
<path d="M7.5 7.5 L13.5 7.5 C18 11 19 18 17.5 23 L3 23 C1 18 2.5 11 7.5 7.5 Z" fill="url(#bag)"/>
<text x="10" y="20" font-family="Liberation Sans" font-size="10" font-weight="bold" text-anchor="middle" fill="#3a3020">$</text>
<rect x="14" y="12" width="4.5" height="15" fill="url(#coin)"/>
<rect x="18.5" y="15" width="3.5" height="12" fill="url(#coin)"/>
<rect x="22" y="18" width="3" height="9" fill="url(#coin)"/>
</svg>
<svg class="a" style="left:566px;top:265px" width="18" height="14" viewBox="0 0 18 14">
<text x="4.5" y="12" font-family="Liberation Sans" font-size="13" font-weight="bold" text-anchor="middle" fill="#8cc63f">$</text>
<path d="M9 1.5 H16.5 M10 4.5 H16.5 M11 7.5 H16.5 M12 10.5 H16.5" stroke="#f0923a" stroke-width="1.6"/>
</svg>
<svg class="a" style="left:566px;top:286px" width="18" height="16" viewBox="0 0 18 16">
<rect x="1" y="1" width="16" height="3.5" rx="0.8" fill="#111"/>
<path d="M3 3.5 H15 L14.5 15 H3.5 Z" fill="#1f8a3c"/>
<ellipse cx="9" cy="8.5" rx="4" ry="2" fill="#5aa8e8"/>
<rect x="8" y="12" width="2" height="1.5" fill="#fff"/>
</svg>
<svg class="a" style="left:566px;top:308px" width="18" height="15" viewBox="0 0 18 15">
<path d="M1 4 L5 8 M2 8 L4.5 4" stroke="#f0a040" stroke-width="1.3"/>
<rect x="6" y="2" width="2" height="11" fill="#3b8ee0"/>
<path d="M8 6 C8 4 14 4 14 6 L15 13 H7.5 Z" fill="#2f8a46"/>
<path d="M11 9 L16.5 2 M14 2 H17 V5" stroke="#e02020" stroke-width="1.5" fill="none"/>
</svg>
<svg class="a" style="left:729px;top:266px" width="26" height="30" viewBox="0 0 26 30">
<path d="M9.5 3.8 L15 2.2 L17.8 12.6 L12.3 14 Z" fill="#fff" stroke="#2da838" stroke-width="1.5"/>
<rect x="15.5" y="1.5" width="8.5" height="11.5" fill="#fff" stroke="#2da838" stroke-width="1.6"/>
<path d="M17.5 4 C19 6 20 6 21.5 4" fill="none" stroke="#2da838" stroke-width="1"/>
<circle cx="19.7" cy="9.8" r="2.2" fill="#2da838"/>
<path d="M10 15 L24 14 C25 18 25.5 22 24 26 L12 27 C10.5 23 10 19 10 15 Z" fill="#e8b97a"/>
<path d="M1 18.5 L8 17 L10.5 27.5 L3.5 29 Z" fill="#1e3264"/>
<rect x="5.5" y="24" width="2" height="2" fill="#fff"/>
</svg>
<svg class="a" style="left:814.5px;top:265px" width="30" height="31" viewBox="0 0 30 31">
<rect x="1" y="1" width="12" height="30" fill="#4a4a4a"/>
<rect x="1" y="1" width="12" height="4" fill="#7a0a0a"/>
<path d="M1 5 L12 5 L13 8 L9 11 L6 17 L1 17 Z" fill="#f0c8a0"/>
<rect x="16" y="1" width="12.5" height="30" fill="#4a4a4a"/>
<rect x="19" y="2" width="6" height="1.2" fill="#9a9a9a"/><rect x="4" y="28" width="6" height="1.2" fill="#9a9a9a"/>
<circle cx="22" cy="10" r="3.8" fill="#f5c030"/>
<circle cx="6.5" cy="22" r="3.8" fill="#f5c030"/>
<path d="M12 16 H18 M12 19.5 H16" stroke="#2fc07a" stroke-width="1.6"/>
<circle cx="21.5" cy="22.5" r="7.3" fill="#e8202a"/>
<path d="M18.5 19.5 L24.5 25.5 M24.5 19.5 L18.5 25.5" stroke="#fff" stroke-width="2"/>
</svg>
<svg class="a" style="left:1092px;top:265px" width="30" height="31" viewBox="0 0 30 31">
<rect x="1" y="1" width="12" height="30" fill="#4a4a4a"/>
<rect x="1" y="1" width="12" height="4" fill="#7a0a0a"/>
<path d="M1 5 L12 5 L13 8 L9 11 L6 17 L1 17 Z" fill="#f0c8a0"/>
<rect x="16" y="1" width="12.5" height="30" fill="#4a4a4a"/>
<rect x="19" y="2" width="6" height="1.2" fill="#9a9a9a"/><rect x="4" y="28" width="6" height="1.2" fill="#9a9a9a"/>
<circle cx="22" cy="10" r="3.8" fill="#f5c030"/>
<circle cx="6.5" cy="22" r="3.8" fill="#f5c030"/>
<path d="M12 16 H18 M12 19.5 H16" stroke="#2fc07a" stroke-width="1.6"/>
<circle cx="21.5" cy="22.5" r="7.3" fill="#e8202a"/>
<path d="M18.5 19.5 L24.5 25.5 M24.5 19.5 L18.5 25.5" stroke="#fff" stroke-width="2"/>
</svg>
<svg class="a" style="left:882px;top:264px" width="16" height="15" viewBox="0 0 16 15">
<circle cx="8" cy="1.5" r="1.3" fill="#f2e24a"/><path d="M3 2 L6 5 M13 2 L10 5" stroke="#e24a4a" stroke-width="1.3"/><path d="M12 2.5 L10 5" stroke="#5ab04a" stroke-width="1.3"/>
<path d="M8 4 V14" stroke="#3b8ee0" stroke-width="2.2"/><circle cx="8" cy="7" r="1.6" fill="#3b8ee0"/><circle cx="8" cy="11" r="1.6" fill="#3b8ee0"/>
</svg>
<svg class="a" style="left:882px;top:287px" width="17" height="16" viewBox="0 0 17 16">
<circle cx="8" cy="8" r="7" fill="#1f4f7a"/>
<path d="M2 6 A7 7 0 0 1 9 1 L9 6 Z" fill="#2f8a46"/>
<path d="M10 1.5 A7 7 0 0 1 15 10 L10 9 Z" fill="#e87a20"/>
<circle cx="7" cy="8" r="3.8" fill="#fff" stroke="#222" stroke-width="1.2"/>
<text x="7" y="10.5" font-family="Liberation Sans" font-size="7" font-weight="bold" text-anchor="middle" fill="#222">$</text>
</svg>
<svg class="a" style="left:882px;top:309px" width="17" height="17" viewBox="0 0 17 17">
<path d="M1 4 L7 0.5 L10 6 L4 9.5 Z" fill="#3fae49"/>
<rect x="9" y="2" width="6" height="5" fill="#e8d0b0"/>
<circle cx="10.5" cy="11.5" r="4.8" fill="#e8302a"/>
<path d="M8.5 9.5 L12.5 13.5 M12.5 9.5 L8.5 13.5" stroke="#fff" stroke-width="1.4"/>
<rect x="1" y="11" width="4" height="2" fill="#d9b080"/>
</svg>
<div class="a" style="left:226px;top:347px;width:1216px;height:150px;background:#fff;"></div>
<div class="a" style="left:226px;top:347px;width:1216px;height:1px;background:#c8c8c8;"></div>
<div class="a" style="left:226px;top:347px;width:1px;height:150px;background:#c8c8c8;"></div>
<div class="a" style="left:230px;top:351px;width:1121px;height:31px;background:#f3f3f3;"></div>
<div class="a" style="left:242px;top:383px;width:1108px;height:31px;background:#3399ff;"></div>
<div class="a" style="left:242px;top:415px;width:1108px;height:31px;background:#f2f2f2;"></div>
<div class="a" style="left:230px;top:383px;width:11px;height:95px;background:#f0f0f0;"></div>
<div class="a" style="left:230px;top:382px;width:1121px;height:1px;background:#6b6b6b;"></div>
<div class="a" style="left:242px;top:414px;width:1109px;height:1px;background:#c4c4c4;"></div>
<div class="a" style="left:230px;top:414px;width:11px;height:1px;background:#6b6b6b;"></div>
<div class="a" style="left:242px;top:446px;width:1109px;height:1px;background:#c4c4c4;"></div>
<div class="a" style="left:230px;top:446px;width:11px;height:1px;background:#6b6b6b;"></div>
<div class="a" style="left:242px;top:478px;width:1109px;height:1px;background:#c4c4c4;"></div>
<div class="a" style="left:230px;top:478px;width:11px;height:1px;background:#6b6b6b;"></div>
<div class="a" style="left:241px;top:351px;width:1px;height:146px;background:#6b6b6b;"></div>
<div class="a" style="left:385px;top:351px;width:1px;height:31px;background:#6b6b6b;"></div>
<div class="a" style="left:385px;top:383px;width:1px;height:114px;background:#c4c4c4;"></div>
<div class="a" style="left:509px;top:351px;width:1px;height:31px;background:#6b6b6b;"></div>
<div class="a" style="left:509px;top:383px;width:1px;height:114px;background:#c4c4c4;"></div>
<div class="a" style="left:629px;top:351px;width:1px;height:31px;background:#6b6b6b;"></div>
<div class="a" style="left:629px;top:383px;width:1px;height:114px;background:#c4c4c4;"></div>
<div class="a" style="left:782px;top:351px;width:1px;height:31px;background:#6b6b6b;"></div>
<div class="a" style="left:782px;top:383px;width:1px;height:114px;background:#c4c4c4;"></div>
<div class="a" style="left:842px;top:351px;width:1px;height:31px;background:#6b6b6b;"></div>
<div class="a" style="left:842px;top:383px;width:1px;height:114px;background:#c4c4c4;"></div>
<div class="a" style="left:902px;top:351px;width:1px;height:31px;background:#6b6b6b;"></div>
<div class="a" style="left:902px;top:383px;width:1px;height:114px;background:#c4c4c4;"></div>
<div class="a" style="left:944px;top:351px;width:1px;height:31px;background:#6b6b6b;"></div>
<div class="a" style="left:944px;top:383px;width:1px;height:114px;background:#c4c4c4;"></div>
<div class="a" style="left:1025px;top:351px;width:1px;height:31px;background:#6b6b6b;"></div>
<div class="a" style="left:1025px;top:383px;width:1px;height:114px;background:#c4c4c4;"></div>
<div class="a" style="left:1106px;top:351px;width:1px;height:31px;background:#6b6b6b;"></div>
<div class="a" style="left:1106px;top:383px;width:1px;height:114px;background:#c4c4c4;"></div>
<div class="a" style="left:1167px;top:351px;width:1px;height:31px;background:#6b6b6b;"></div>
<div class="a" style="left:1167px;top:383px;width:1px;height:114px;background:#c4c4c4;"></div>
<div class="a" style="left:1350px;top:351px;width:1px;height:31px;background:#6b6b6b;"></div>
<div class="a" style="left:1350px;top:383px;width:1px;height:114px;background:#c4c4c4;"></div>
<svg class="a" style="left:231px;top:359px" width="10" height="16" viewBox="0 0 10 16">
<path d="M5 0.6 L9.4 5.2 L7.3 5.2 L7.3 10.8 L9.4 10.8 L5 15.4 L0.6 10.8 L2.7 10.8 L2.7 5.2 L0.6 5.2 Z" fill="#7a0000" stroke="#000" stroke-width="0.9" stroke-linejoin="round"/>
<rect x="4.2" y="3.6" width="1.6" height="8.8" fill="#ffee00"/>
</svg>
<svg class="a" style="left:233px;top:393px" width="8" height="13" viewBox="0 0 8 13"><path d="M0.5 0 L7.5 6.5 L0.5 13 Z" fill="#000"/></svg>
<div class="a t" style="left:-186.5px;width:1000px;text-align:center;top:362px;font-size:12px;line-height:13.80px;color:#000;">Nombre</div>
<div class="a t" style="left:-52.5px;width:1000px;text-align:center;top:362px;font-size:12px;line-height:13.80px;color:#000;">Tipo</div>
<div class="a t" style="left:69.5px;width:1000px;text-align:center;top:362px;font-size:12px;line-height:13.80px;color:#000;">Codigo</div>
<div class="a t" style="left:206.0px;width:1000px;text-align:center;top:362px;font-size:12px;line-height:13.80px;color:#000;">Producto</div>
<div class="a t" style="left:312.5px;width:1000px;text-align:center;top:362px;font-size:12px;line-height:13.80px;color:#000;">Monto</div>
<div class="a t" style="left:372.5px;width:1000px;text-align:center;top:362px;font-size:12px;line-height:13.80px;color:#000;">Saldo</div>
<div class="a t" style="left:423.5px;width:1000px;text-align:center;top:362px;font-size:12px;line-height:13.80px;color:#000;">Mora</div>
<div class="a t" style="left:485.0px;width:1000px;text-align:center;top:362px;font-size:12px;line-height:13.80px;color:#000;">Fecha</div>
<div class="a t" style="left:566.0px;width:1000px;text-align:center;top:362px;font-size:12px;line-height:13.80px;color:#000;">Ultimo Pago</div>
<div class="a t" style="left:637.0px;width:1000px;text-align:center;top:362px;font-size:12px;line-height:13.80px;color:#000;">Estado</div>
<div class="a t" style="left:759.0px;width:1000px;text-align:center;top:362px;font-size:12px;line-height:13.80px;color:#000;">Analista</div>
<div class="a t" style="left:245px;top:393px;font-size:12px;line-height:13.80px;color:#fff;-webkit-text-stroke:0.1px currentColor;">Galindo Suaña, Donato</div>
<div class="a t" style="left:389px;top:393px;font-size:12px;line-height:13.80px;color:#fff;-webkit-text-stroke:0.1px currentColor;">Préstamo individual</div>
<div class="a t" style="left:513px;top:393px;font-size:12px;line-height:13.80px;color:#fff;-webkit-text-stroke:0.1px currentColor;">L25HUE000000566</div>
<div class="a t" style="left:633px;top:393px;font-size:12px;line-height:13.80px;color:#fff;letter-spacing:-0.7px;-webkit-text-stroke:0.1px currentColor;">CREDIFLASH DIARIO</div>
<div class="a t" style="left:-161px;width:1000px;text-align:right;top:393px;font-size:12px;line-height:13.80px;color:#fff;-webkit-text-stroke:0.1px currentColor;">500.00</div>
<div class="a t" style="left:-101px;width:1000px;text-align:right;top:393px;font-size:12px;line-height:13.80px;color:#fff;-webkit-text-stroke:0.1px currentColor;">310.38</div>
<div class="a t" style="left:-59px;width:1000px;text-align:right;top:393px;font-size:12px;line-height:13.80px;color:#fff;-webkit-text-stroke:0.1px currentColor;">0.57</div>
<div class="a t" style="left:948px;top:393px;font-size:12px;line-height:13.80px;color:#fff;-webkit-text-stroke:0.1px currentColor;">18<span style="padding:0 0.7px">/</span>03<span style="padding:0 0.7px">/</span>2025</div>
<div class="a t" style="left:1029px;top:393px;font-size:12px;line-height:13.80px;color:#fff;-webkit-text-stroke:0.1px currentColor;">02<span style="padding:0 0.7px">/</span>04<span style="padding:0 0.7px">/</span>2025</div>
<div class="a t" style="left:1110px;top:393px;font-size:12px;line-height:13.80px;color:#fff;-webkit-text-stroke:0.1px currentColor;">Activo</div>
<div class="a t" style="left:1171px;top:393px;font-size:12px;line-height:13.80px;color:#fff;-webkit-text-stroke:0.1px currentColor;">Huaman Warthon, Fabiola</div>
<div class="a t" style="left:245px;top:425px;font-size:12px;line-height:13.80px;color:#000;">Galindo Suaña, Donato</div>
<div class="a t" style="left:389px;top:425px;font-size:12px;line-height:13.80px;color:#000;">Préstamo individual</div>
<div class="a t" style="left:513px;top:425px;font-size:12px;line-height:13.80px;color:#000;">001--0474</div>
<div class="a t" style="left:633px;top:425px;font-size:12px;line-height:13.80px;color:#000;letter-spacing:-0.7px;">CREDIFLASH QUINCENAL</div>
<div class="a t" style="left:-161px;width:1000px;text-align:right;top:425px;font-size:12px;line-height:13.80px;color:#000;">5000.00</div>
<div class="a t" style="left:-101px;width:1000px;text-align:right;top:425px;font-size:12px;line-height:13.80px;color:#000;">3933.00</div>
<div class="a t" style="left:-59px;width:1000px;text-align:right;top:425px;font-size:12px;line-height:13.80px;color:#000;">0.00</div>
<div class="a t" style="left:948px;top:425px;font-size:12px;line-height:13.80px;color:#000;">19<span style="padding:0 0.7px">/</span>12<span style="padding:0 0.7px">/</span>2024</div>
<div class="a t" style="left:1029px;top:425px;font-size:12px;line-height:13.80px;color:#000;">18<span style="padding:0 0.7px">/</span>03<span style="padding:0 0.7px">/</span>2025</div>
<div class="a t" style="left:1110px;top:425px;font-size:12px;line-height:13.80px;color:#000;">Activo</div>
<div class="a t" style="left:1171px;top:425px;font-size:12px;line-height:13.80px;color:#000;">Espinoza Sutta, Frank Danthol</div>
<div class="a t" style="left:245px;top:457px;font-size:12px;line-height:13.80px;color:#000;">Galindo Suaña, Donato</div>
<div class="a t" style="left:389px;top:457px;font-size:12px;line-height:13.80px;color:#000;">Persona</div>
<div class="a t" style="left:513px;top:457px;font-size:12px;line-height:13.80px;color:#000;">000000004</div>
<div class="a t" style="left:-161px;width:1000px;text-align:right;top:457px;font-size:12px;line-height:13.80px;color:#000;">0.00</div>
<div class="a t" style="left:-101px;width:1000px;text-align:right;top:457px;font-size:12px;line-height:13.80px;color:#000;">0.00</div>
<div class="a t" style="left:-59px;width:1000px;text-align:right;top:457px;font-size:12px;line-height:13.80px;color:#000;">0.00</div>
<div class="a t" style="left:948px;top:457px;font-size:12px;line-height:13.80px;color:#000;">15<span style="padding:0 0.7px">/</span>01<span style="padding:0 0.7px">/</span>2025</div>
<div class="a t" style="left:1110px;top:457px;font-size:12px;line-height:13.80px;color:#000;">Es socio</div>
<div class="a t" style="left:1171px;top:457px;font-size:12px;line-height:13.80px;color:#000;">Administrador, Usuario</div>
<svg class="a" style="left:0;top:0;mix-blend-mode:multiply" width="1442" height="497" viewBox="0 0 1442 497">
<path d="M1183 100 C1182 93 1190 89.5 1203 89.5 C1215 89.5 1224 90 1232 92.5 L1250 93 C1258 94 1261 97 1260.5 101 C1260 108 1257 113 1245 113 L1218 113 C1213 111 1205 110.5 1196 110.5 C1187 110 1183 106 1183 100 Z" fill="#ffff00"/>
<path d="M847 397 C847 390 852 388 860 388 C866 388 870 389 874 390.5 C880 389.5 890 389.5 897 391 C902 393 903 397 902.5 402 C902 407 898 409.5 890 409.5 L870 409.5 C865 409 862 408.5 857 409 C850 409 847 404 847 397 Z" fill="#ffff00"/>
</svg>
<svg class="a" style="left:0;top:0" width="1442" height="497" viewBox="0 0 1442 497">
<defs><filter id="sh" x="-20%" y="-20%" width="140%" height="140%"><feGaussianBlur in="SourceAlpha" stdDeviation="1"/><feOffset dx="1.5" dy="1.5"/><feComponentTransfer><feFuncA type="linear" slope="0.45"/></feComponentTransfer><feMerge><feMergeNode/><feMergeNode in="SourceGraphic"/></feMerge></filter></defs>
<g filter="url(#sh)" fill="none" stroke="#f00000" stroke-linecap="round" stroke-linejoin="round">
<path d="M1227.2 30 L1227.4 77" stroke-width="4.2"/>
<path d="M1206.8 56 C1211 64 1215 72 1221 80 C1226 86 1231 89 1235.2 90.8 C1236 84 1237.5 76 1239 70 L1242.5 62" stroke-width="4.2"/>
<path d="M881.4 283 C881 300 880.5 330 879.5 350 L877.5 369" stroke-width="4.4"/>
<path d="M862.7 350.5 C863 356 864 361 868 366 C872 371 876 375 880.8 377.8 C884 374 888 371 891 367 C895 361 899 355 903 349.5" stroke-width="4.4"/>
</g></svg>
</body></html>
